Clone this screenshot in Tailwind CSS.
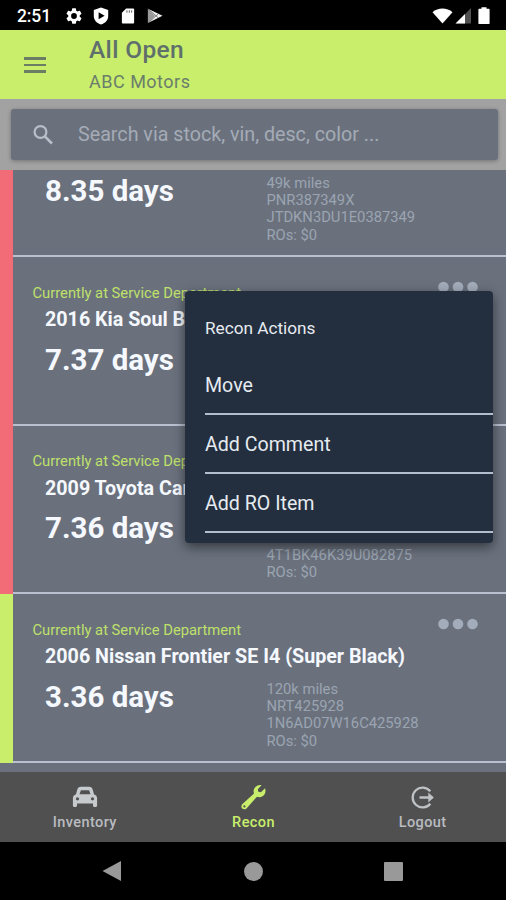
<!DOCTYPE html>
<html lang="en">
<head>
<meta charset="utf-8">
<title>Recon</title>
<script src="https://cdn.jsdelivr.net/npm/@tailwindcss/browser@4"></script>
</head>
<body class="w-[506px] h-[900px] overflow-hidden bg-black font-[Roboto,'Liberation_Sans',sans-serif]">
<div class="relative flex flex-col w-[506px] h-[900px]">
  <!-- Status bar -->
  <div class="h-[30px] shrink-0 flex items-center bg-black text-white pl-[17px] pr-[16px] pt-[1px]">
    <span class="w-[49px] text-[17.500px] font-medium leading-5 tracking-[-.1px] pt-[1px]">2:51</span>
    <svg class="w-[16px] h-[16px]" viewBox="2 2 20 20" fill="currentColor"><path d="M19.14 12.94c.04-.3.06-.61.06-.94s-.02-.64-.07-.94l2.03-1.58a.49.49 0 0 0 .12-.61l-1.92-3.32a.49.49 0 0 0-.59-.22l-2.39.96a7 7 0 0 0-1.62-.94l-.36-2.54A.48.48 0 0 0 13.92 2.400h-3.840a.48.48 0 0 0-.47.410l-.36 2.540c-.59.24-1.13.57-1.62.94l-2.390-.96a.48.48 0 0 0-.59.220L2.740 8.870a.48.48 0 0 0 .12.610l2.030 1.580c-.05.3-.09.63-.09.94s.02.64.07.94l-2.030 1.580a.49.49 0 0 0-.12.610l1.920 3.320c.12.22.37.29.59.22l2.390-.96c.5.38 1.030.7 1.620.94l.36 2.540c.05.24.24.41.48.41h3.840c.24 0 .44-.17.47-.41l.36-2.540c.59-.24 1.130-.56 1.620-.94l2.390.96c.22.08.47 0 .59-.22l1.920-3.320a.48.48 0 0 0-.12-.61zM12 15.600A3.600 3.600 0 1 1 12 8.400a3.600 3.600 0 0 1 0 7.200z"/></svg>
    <svg class="ml-[11px] w-[16px] h-[18px]" viewBox="0 0 16 18"><path fill="#fff" d="M8 .5 15.200 3v6c0 4.200-3.200 7.400-7.200 8.600C4 16.400.8 13.200.8 9V3z"/><path d="M5.600 5.200v7l6-3.500z"/></svg>
    <svg class="ml-[12px] w-[14px] h-[16px]" viewBox="0 0 14 17"><path fill="#fff" d="M5 .5h7.300c.7 0 1.200.5 1.200 1.200v13.600c0 .7-.5 1.200-1.200 1.200H1.700c-.7 0-1.200-.5-1.200-1.200V5z"/><path stroke="#555" stroke-width="1" d="M5.900 2.500v2.500M8.400 2.500v2.500M10.900 2.500v2.500"/></svg>
    <svg class="ml-[12px] w-[16px] h-[16px]" viewBox="0 0 17 17"><path fill="#f0f0f0" d="M1 .8 16.500 8.200 1 16z"/><path fill="#9a9a9a" d="m1 .8 7.500 7.600L1 16z"/><path stroke="#444" stroke-width=".7" fill="none" d="m1 .8 11 9.700M1 16 12 6.200"/></svg>
    <svg class="ml-auto w-[21px] h-[16px]" viewBox="0 0 21 16"><path fill="#fff" d="M.5 4.200C6-.6 15-.6 20.500 4.200L10.500 15.500z"/></svg>
    <svg class="ml-[2px] w-[17px] h-[17px]" viewBox="0 0 17 17"><path fill="#505050" d="M16 1v15.500H1z"/><path fill="#fff" d="M10 7v9.500H.5z"/></svg>
    <svg class="ml-[6px] w-[12px] h-[17px]" viewBox="0 0 12 17"><path fill="#fff" d="M3.500 1.800V.3h5v1.500H11a.6.6 0 0 1 .6.6v13.900a.6.6 0 0 1-.6.6H1a.6.6 0 0 1-.6-.6V2.400a.6.6 0 0 1 .6-.6z"/></svg>
  </div>

  <!-- App header -->
  <header class="h-[69px] shrink-0 flex bg-[#c8ee6c] text-[#5f6f6b]">
    <div class="w-[89px] pl-[24px] pt-[27px] flex flex-col gap-[4px]">
      <i class="block w-[22px] h-[2.500px] bg-[#6b7d63]"></i>
      <i class="block w-[22px] h-[2.500px] bg-[#6b7d63]"></i>
      <i class="block w-[22px] h-[2.500px] bg-[#6b7d63]"></i>
    </div>
    <div class="pt-[5px] flex flex-col items-start">
      <h1 class="text-[24.500px] font-medium leading-[29px] tracking-[.35px]">All Open</h1>
      <p class="text-[18px] leading-[22px] pt-[7px] tracking-[.5px] text-[#6b7d6b]">ABC Motors</p>
    </div>
  </header>

  <!-- Search -->
  <div class="h-[71px] shrink-0 bg-[#a2a2a2] pl-[11px] pt-[10px] pr-[8px]">
    <div class="h-[51px] rounded-[3px] bg-[#6a717d] shadow-[0_1px_4px_rgba(0,0,0,.3)] flex items-center">
      <svg class="ml-[22px] w-[22px] h-[22px]" viewBox="0 0 22 22" fill="none" stroke="#b9bfc8" stroke-width="2.200"><circle cx="7.500" cy="8" r="5.900"/><path d="m11.800 12.300 7.200 7.200" stroke-width="2.600"/></svg>
      <span class="ml-[23px] text-[19.700px] leading-[24px] text-[#a4abb6]">Search via stock, vin, desc, color ...</span>
    </div>
  </div>

  <!-- Vehicle list -->
  <main class="h-[602px] shrink-0 overflow-hidden bg-[#6a717d]">
    <div class="-mt-[82px]">
      <article class="h-[169px] flex">
        <div class="w-[13px] bg-[#f26c78]"></div>
        <div class="flex-1 border-b-2 border-[#b9c1d0] pt-[72px]">
          <div class="flex pt-[11px] pl-[32px]">
            <div class="w-[221.500px] pt-[1px]"><span class="text-[29.500px] font-bold leading-[38px] text-[#f5f8fd]">8.35 days</span></div>
            <div class="pt-[4px] text-[14.750px] leading-[17.200px] text-[#9ba4b1]"><p>49k miles</p><p>PNR387349X</p><p>JTDKN3DU1E0387349</p><p>ROs: $0</p></div>
          </div>
        </div>
      </article>
      <article class="h-[169px] flex">
        <div class="w-[13px] bg-[#f26c78]"></div>
        <div class="flex-1 border-b-2 border-[#b9c1d0] pt-[26px]">
          <div class="h-[20px] pl-[19.500px] pr-[28px] flex justify-between text-[14.750px] leading-5 text-[#bfe06a]"><span>Currently at Service Department</span>
            <svg class="w-[40px] h-[12px] -mt-[2px]" viewBox="0 0 40 12" fill="#a3acba"><circle cx="5.500" cy="6" r="5.300"/><circle cx="20" cy="6" r="5.300"/><circle cx="34.500" cy="6" r="5.300"/></svg></div>
          <h2 class="h-[26px] pl-[32px] pt-[5px] text-[19.700px] leading-[24px] font-bold text-[#f5f8fd]">2016 Kia Soul B</h2>
          <div class="flex pt-[11px] pl-[32px]">
            <div class="w-[221.500px] pt-[1px]"><span class="text-[29.500px] font-bold leading-[38px] text-[#f5f8fd]">7.37 days</span></div>
          </div>
        </div>
      </article>
      <article class="h-[168px] flex">
        <div class="w-[13px] bg-[#f26c78]"></div>
        <div class="flex-1 border-b-2 border-[#b9c1d0] pt-[25px]">
          <div class="h-[21px] pl-[19.500px] text-[14.750px] leading-5 text-[#bfe06a]">Currently at Service Dep</div>
          <h2 class="h-[26px] pl-[32px] pt-[5px] text-[19.700px] leading-[24px] font-bold text-[#f5f8fd]">2009 Toyota Cam</h2>
          <div class="flex pt-[11px] pl-[32px]">
            <div class="w-[221.500px]"><span class="text-[29.500px] font-bold leading-[38px] text-[#f5f8fd]">7.36 days</span></div>
            <div class="pt-[38px] text-[14.750px] leading-[17.200px] text-[#9ba4b1]"><p>4T1BK46K39U082875</p><p>ROs: $0</p></div>
          </div>
        </div>
      </article>
      <article class="h-[169px] flex">
        <div class="w-[13px] bg-[#c8ee6c]"></div>
        <div class="flex-1 border-b-2 border-[#b9c1d0] pt-[26px]">
          <div class="h-[20px] pl-[19.500px] pr-[28px] flex justify-between text-[14.750px] leading-5 text-[#bfe06a]"><span>Currently at Service Department</span>
            <svg class="w-[40px] h-[12px] -mt-[2px]" viewBox="0 0 40 12" fill="#a3acba"><circle cx="5.500" cy="6" r="5.300"/><circle cx="20" cy="6" r="5.300"/><circle cx="34.500" cy="6" r="5.300"/></svg></div>
          <h2 class="h-[26px] pl-[32px] pt-[5px] text-[19.700px] leading-[24px] font-bold text-[#f5f8fd]">2006 Nissan Frontier SE I4 (Super Black)</h2>
          <div class="flex pt-[11px] pl-[32px]">
            <div class="w-[221.500px] pt-[1px]"><span class="text-[29.500px] font-bold leading-[38px] text-[#f5f8fd]">3.36 days</span></div>
            <div class="pt-[4px] text-[14.750px] leading-[17.200px] text-[#9ba4b1]"><p>120k miles</p><p>NRT425928</p><p>1N6AD07W16C425928</p><p>ROs: $0</p></div>
          </div>
        </div>
      </article>
    </div>
  </main>

  <!-- Tabs -->
  <nav class="h-[70px] shrink-0 grid grid-cols-3 bg-[#505050] text-[#b9bcc0] text-[14.500px] font-medium tracking-[.4px]">
    <div class="flex flex-col items-center pt-[12px] pl-[1px]">
      <svg class="w-[26px] h-[26px]" viewBox="0 0 26 26"><path fill="#c6cacd" fill-rule="evenodd" d="M5.200 6C5.700 3.900 7 2.800 9 2.800h8c2 0 3.300 1.100 3.800 3.200l1.300 4.400c1.900.5 3 1.900 3 3.800v7.600c0 .7-.5 1.200-1.200 1.200h-1.700c-.7 0-1.200-.5-1.200-1.200v-2.200H5v2.200c0 .7-.5 1.200-1.200 1.200H2.100c-.7 0-1.200-.5-1.200-1.200v-7.600c0-1.900 1.100-3.300 3-3.800zM8.900 6.300l-1.400 4h11l-1.400-4zM5.500 13.200a1.600 1.600 0 1 0 0 3.200 1.600 1.600 0 0 0 0-3.200zm15 0a1.600 1.600 0 1 0 0 3.200 1.600 1.600 0 0 0 0-3.200z"/></svg>
      <span class="leading-[20px] pt-[3px]">Inventory</span>
    </div>
    <div class="flex flex-col items-center pt-[12px] pl-[1px] text-[#c8ee6c]">
      <svg class="w-[26px] h-[26px]" viewBox="0 0 26 26"><path fill="#c8ee6c" fill-rule="evenodd" d="m21.500 1.300-3.700 3.900.5 2.500 2.700.6 4-4c1.200 3.300.2 6.500-2.400 8-1.900 1.100-3.900 1.100-5.600.4L6.500 24.400c-1.100 1.200-3.200 1.200-4.300.1s-1.100-3.100 0-4.200L14 9.400c-.7-2-.5-4.200 1-6 1.600-1.900 4.200-2.900 6.500-2.100zM4.400 21.300a1.100 1.100 0 1 0 0 2.200 1.100 1.100 0 0 0 0-2.200z"/></svg>
      <span class="leading-[20px] pt-[3px]">Recon</span>
    </div>
    <div class="flex flex-col items-center pt-[12px] pl-[2px]">
      <svg class="w-[26px] h-[26px]" viewBox="0 0 26 26" fill="none" stroke="#bfc3c6" stroke-width="2.300"><path d="M20.300 7.300A9.900 9.900 0 1 0 20.300 19.700M9.500 13.500h13"/><path fill="#bfc3c6" stroke="none" d="m18.300 8.500 5.500 5-5.500 5z"/></svg>
      <span class="leading-[20px] pt-[3px]">Logout</span>
    </div>
  </nav>

  <!-- System navigation -->
  <div class="h-[58px] shrink-0 bg-black grid grid-cols-[224px_59px_220px] items-center justify-items-center">
    <svg class="w-[20px] h-[22px]" viewBox="0 0 20 22"><path fill="#999" d="M19 1v20L.5 11z"/></svg>
    <div class="w-[19px] h-[19px] rounded-full bg-[#999]"></div>
    <div class="w-[19px] h-[19px] rounded-[1px] bg-[#999]"></div>
  </div>

  <!-- Popover -->
  <div class="absolute left-[185px] top-[291px] w-[308px] h-[252px] rounded-[4px] bg-[#232f3f] text-[#e6ebf0] pl-[20px] shadow-[0_4px_12px_rgba(0,0,0,.5)]">
    <div class="h-[65px] pt-[27px] text-[17.200px] leading-[20px]">Recon Actions</div>
    <div class="h-[59px] border-b-2 border-[#b4bdcb] flex items-center pt-[2px] text-[19.600px]">Move</div>
    <div class="h-[59px] border-b-2 border-[#b4bdcb] flex items-center pt-[2px] text-[19.600px]">Add Comment</div>
    <div class="h-[59px] border-b-2 border-[#b4bdcb] flex items-center pt-[2px] text-[19.600px]">Add RO Item</div>
  </div>
</div>
</body>
</html>
